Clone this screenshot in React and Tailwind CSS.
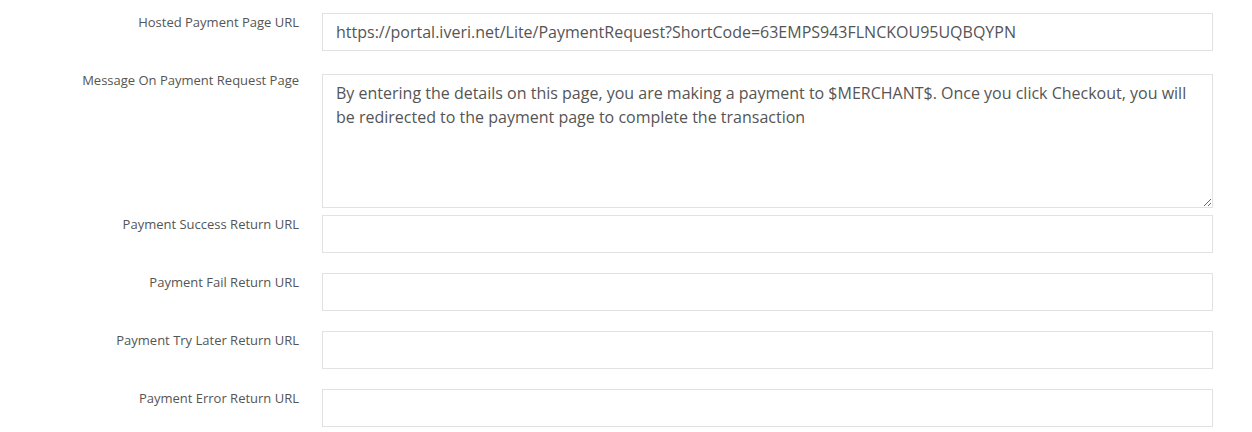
export default function App() {
  const rows = [
    { label: "Payment Success Return URL", mt: "mt-[7px]" },
    { label: "Payment Fail Return URL", mt: "mt-[20px]" },
    { label: "Payment Try Later Return URL", mt: "mt-[20px]" },
    { label: "Payment Error Return URL", mt: "mt-[20px]" },
  ];
  const labelCls =
    "w-[299px] shrink-0 text-right text-[13px] leading-[18px] text-[#555555]";
  const inputCls =
    "w-[891px] h-[38px] border border-[#e2e2e2] bg-white px-[13px] text-[16px] text-[#555555] outline-none";
  return (
    <div
      className="w-[1252px] h-[432px] bg-white pt-[13px] overflow-hidden"
      style={{ fontFamily: '"Open Sans", sans-serif' }}
    >
      <div className="flex items-start gap-[23px]">
        <div className={labelCls}>Hosted Payment Page URL</div>
        <input
          className={inputCls}
          readOnly
          defaultValue="https://portal.iveri.net/Lite/PaymentRequest?ShortCode=63EMPS943FLNCKOU95UQBQYPN"
        />
      </div>
      <div className="flex items-start gap-[23px] mt-[23px]">
        <div className={`${labelCls} -mt-[3px]`}>Message On Payment Request Page</div>
        <textarea
          className="block w-[891px] h-[134px] border border-[#e2e2e2] bg-white px-[13px] pt-[6px] text-[16px] leading-[24px] text-[#555555] outline-none resize-y"
          readOnly
          defaultValue="By entering the details on this page, you are making a payment to $MERCHANT$. Once you click Checkout, you will be redirected to the payment page to complete the transaction"
        />
      </div>
      {rows.map((r) => (
        <div key={r.label} className={`flex items-start gap-[23px] ${r.mt}`}>
          <div className={labelCls}>{r.label}</div>
          <input className={inputCls} readOnly defaultValue="" />
        </div>
      ))}
    </div>
  );
}
